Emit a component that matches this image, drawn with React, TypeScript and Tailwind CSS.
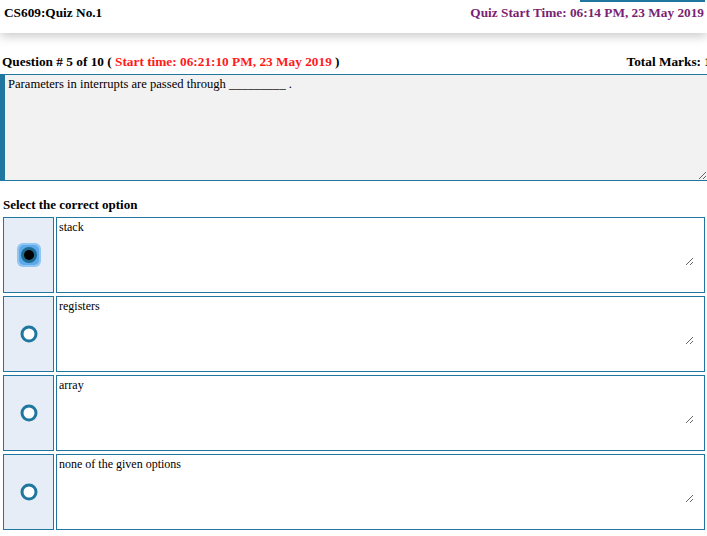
import React from "react";

const OPTIONS = ["stack", "registers", "array", "none of the given options"];
const SERIF = { fontFamily: "'Liberation Serif', 'Times New Roman', serif" };

function Radio({ checked }: { checked: boolean }) {
  if (checked)
    return (
      <svg width="26" height="26" viewBox="0 0 26 26">
        <rect x="1" y="1" width="24" height="24" rx="6" fill="#8fc6f3" />
        <rect x="3" y="3" width="20" height="20" rx="5" fill="#5da9ea" />
        <circle cx="13" cy="13" r="8" fill="#1d6b93" />
        <circle cx="13" cy="13" r="5" fill="#000" />
      </svg>
    );
  return (
    <svg width="22" height="22" viewBox="0 0 22 22">
      <circle cx="11" cy="11" r="7" fill="#fff" stroke="#1f77a0" strokeWidth="3" />
    </svg>
  );
}

export default function App() {
  return (
    <div className="min-h-screen bg-white text-black overflow-hidden" style={SERIF}>
      {/* Header */}
      <div className="relative h-[33px] bg-white flex items-start justify-between pt-[5px] pl-1 pr-[3px] shadow-[0_3px_10px_rgba(0,0,0,0.22)] z-10">
        <div className="absolute right-[2px] top-0 w-[125px] h-[2px] bg-[#1f77a0]" />
        <h1 className="text-[13.3px] leading-[16px] font-bold">CS609:Quiz No.1</h1>
        <span className="text-[13.3px] leading-[16px] font-bold text-[#7a1f73]">Quiz Start Time: 06:14 PM, 23 May 2019</span>
      </div>

      {/* Question line */}
      <div className="mt-[21px] flex items-center justify-between pl-[2px] -mr-[4px] h-[15px]">
        <p className="text-[13.3px] font-bold whitespace-nowrap">
          Question # 5 of 10 ( <span className="text-[#ff1a1a]">Start time: 06:21:10 PM, 23 May 2019</span> )
        </p>
        <p className="text-[13.3px] font-bold whitespace-nowrap">Total Marks: 1</p>
      </div>

      <textarea
        readOnly
        defaultValue="Parameters in interrupts are passed through _________ ."
        className="mt-[5px] block w-[708px] h-[107px] bg-[#f2f2f2] border border-[#1f77a0] border-l-[5px] px-[3px] py-[2px] text-[12.6px] leading-[15px] outline-none"
        style={SERIF}
      />

      <h2 className="mt-[14px] pl-[3px] text-[13px] font-bold">Select the correct option</h2>

      <div className="mt-[2px] pl-[3px] pr-[2px] flex flex-col gap-[3px]">
        {OPTIONS.map((o, i) => (
          <div key={o} className="flex gap-[2px] h-[76px]">
            <div className="w-[51px] shrink-0 bg-[#e6edf6] border border-[#1f77a0] flex items-center justify-center">
              <Radio checked={i === 0} />
            </div>
            <div className="flex-1 bg-white border border-[#1f77a0]">
              <textarea
                readOnly
                defaultValue={o}
                className="block w-[calc(100%-10px)] h-[48px] bg-transparent px-[2px] py-[2px] text-[12px] leading-[14px] outline-none"
                style={SERIF}
              />
            </div>
          </div>
        ))}
      </div>
    </div>
  );
}
